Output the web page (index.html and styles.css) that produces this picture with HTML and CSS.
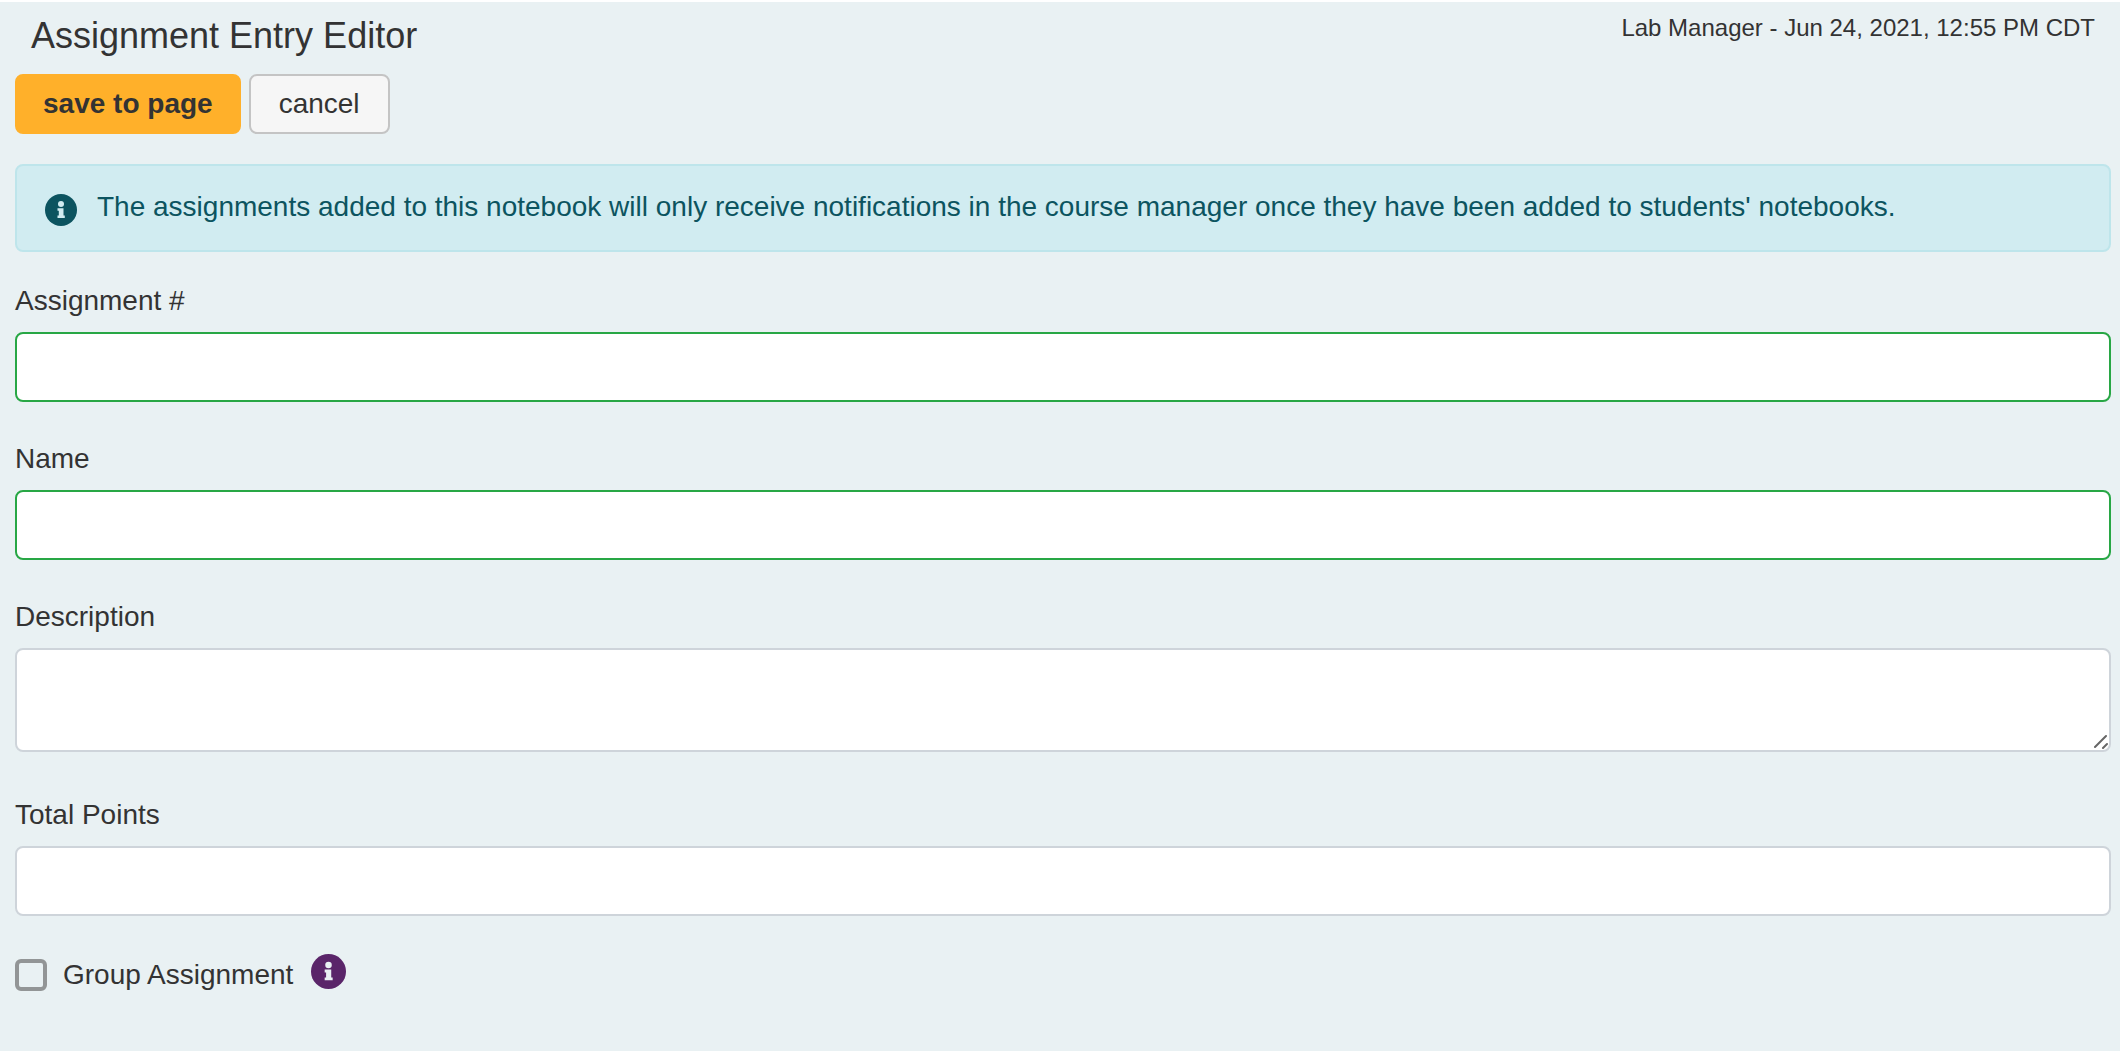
FILE: index.html
```html
<!DOCTYPE html>
<html lang="en">
<head>
    <meta charset="UTF-8">
    <meta name="viewport" content="width=device-width, initial-scale=1.0">
    <title>Assignment Entry Editor</title>
    <link rel="stylesheet" href="styles.css">
</head>
<body>

    <form class="editor">
        <header class="editor-header">
            <h1>Assignment Entry Editor</h1>
            <p class="meta">Lab Manager - Jun 24, 2021, 12:55 PM CDT</p>
        </header>

        <div class="actions">
            <button type="submit" class="btn btn-save">save to page</button>
            <button type="button" class="btn btn-cancel">cancel</button>
        </div>

        <div class="alert" role="alert">
            <svg class="alert-icon" viewBox="0 0 32 32" aria-hidden="true">
                <circle cx="16" cy="16" r="16" fill="currentColor"/>
                <circle cx="16" cy="10" r="3" fill="#d1ecf1"/>
                <path d="M12.5 14.2h6v7.3h1.3v2.6h-7.3v-2.6h1.3v-4.7h-1.3z" fill="#d1ecf1"/>
            </svg>
            <p>The assignments added to this notebook will only receive notifications in the course manager once they have been added to students' notebooks.</p>
        </div>

        <div class="form-group">
            <label for="number">Assignment #</label>
            <input type="text" id="number" class="form-control valid">
        </div>

        <div class="form-group">
            <label for="name">Name</label>
            <input type="text" id="name" class="form-control valid">
        </div>

        <div class="form-group form-group-area">
            <label for="description">Description</label>
            <div class="area">
                <textarea id="description" class="form-control"></textarea>
                <svg class="grip" viewBox="0 0 16 16" aria-hidden="true">
                    <path d="M2 14L13 3M10 15L14 11"/>
                </svg>
            </div>
        </div>

        <div class="form-group">
            <label for="points">Total Points</label>
            <input type="text" id="points" class="form-control">
        </div>

        <div class="form-check">
            <input type="checkbox" id="group" class="checkbox">
            <label for="group">Group Assignment</label>
            <button type="button" class="help" aria-label="About group assignments">
                <svg viewBox="0 0 32 32" aria-hidden="true">
                    <circle cx="16" cy="16" r="16" fill="currentColor"/>
                    <circle cx="16" cy="10" r="3" fill="#e9f1f3"/>
                    <path d="M12.5 14.2h6v7.3h1.3v2.6h-7.3v-2.6h1.3v-4.7h-1.3z" fill="#e9f1f3"/>
                </svg>
            </button>
        </div>
    </form>

</body>
</html>
```

FILE: styles.css
```css
/* General */
* {
    box-sizing: border-box;
}

body {
    margin: 0;
    min-height: 100vh;
    border-top: 2px solid #fff;
    background-color: #e9f1f3;
    color: #333;
    font-family: "Helvetica Neue", "Liberation Sans", Arial, sans-serif;
    font-size: 28px;
    line-height: 42px;
}

h1, p {
    margin: 0;
}

.editor {
    padding: 12px 9px 40px 15px;
}

/* Header */
.editor-header {
    display: flex;
    justify-content: space-between;
    align-items: flex-start;
    padding: 0 16px;
    margin-bottom: 16px;
}

.editor-header h1 {
    font-size: 36px;
    font-weight: normal;
    line-height: 44px;
}

.meta {
    font-size: 24px;
    line-height: 28px;
}

/* Buttons */
.actions {
    display: flex;
    align-items: center;
    gap: 8px;
    margin-bottom: 30px;
}

.btn {
    height: 60px;
    padding: 0 28px;
    border: 2px solid;
    border-radius: 8px;
    color: #333;
    font: inherit;
    cursor: pointer;
}

.btn-save {
    padding: 0 26px;
    border-color: #ffb02a;
    background-color: #ffb02a;
    font-weight: bold;
}

.btn-cancel {
    border-color: #c4c4c4;
    background-color: #f6f6f6;
}

/* Notice */
.alert {
    display: flex;
    align-items: flex-start;
    gap: 20px;
    padding: 20px 28px 22px;
    margin-bottom: 28px;
    border: 2px solid #bee5eb;
    border-radius: 8px;
    background-color: #d1ecf1;
    color: #0c5460;
}

.alert-icon {
    flex: none;
    width: 32px;
    height: 32px;
    margin-top: 8px;
}

/* Fields */
.form-group {
    margin-bottom: 36px;
}

.form-group-area {
    margin-bottom: 42px;
}

.form-group label {
    display: block;
    margin-bottom: 10px;
}

.form-control {
    display: block;
    width: 100%;
    height: 70px;
    padding: 12px 24px;
    border: 2px solid #ced4da;
    border-radius: 8px;
    background-color: #fff;
    color: #333;
    font: inherit;
}

.form-control.valid {
    border-color: #28a745;
}

.area {
    position: relative;
}

textarea.form-control {
    height: 104px;
    resize: none;
}

.grip {
    position: absolute;
    right: 2px;
    bottom: 3px;
    width: 16px;
    height: 16px;
    fill: none;
    stroke: #666;
    stroke-width: 2;
    stroke-linecap: round;
    pointer-events: none;
}

/* Checkbox row */
.form-check {
    display: flex;
    align-items: center;
    padding-top: 2px;
}

.checkbox {
    appearance: none;
    width: 32px;
    height: 32px;
    margin: 0 16px 0 0;
    border: 4px solid #929596;
    border-radius: 6px;
}

.checkbox:checked {
    background-color: #5a2569;
}

.help {
    align-self: flex-start;
    width: 35px;
    height: 35px;
    padding: 0;
    margin-left: 18px;
    border: none;
    background: none;
    color: #5a2569;
    cursor: pointer;
}

.help svg {
    display: block;
}
```
